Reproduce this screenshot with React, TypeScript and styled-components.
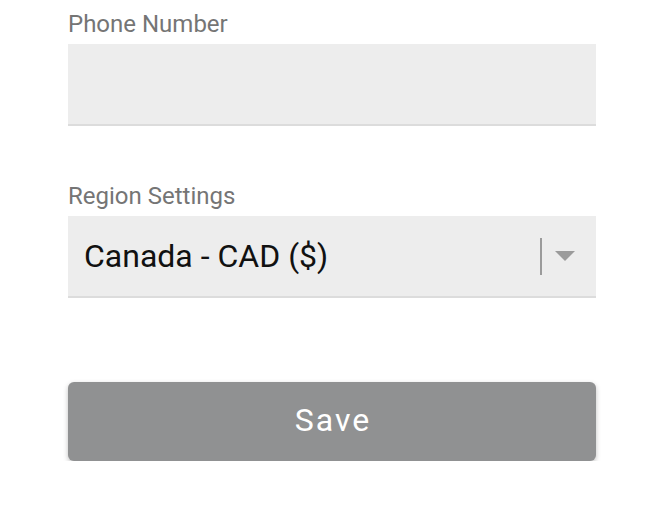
import React from 'react'
import styled, { createGlobalStyle } from 'styled-components'

const GlobalStyle = createGlobalStyle`
  body {
    margin: 0;
    background: #ffffff;
    font-family: Roboto, "Liberation Sans", sans-serif;
  }
`

const Page = styled.div`
  width: 528px;
  padding: 10px 0 0 68px;
  display: flex;
  flex-direction: column;
`

const Field = styled.div<{ gap?: number }>`
  display: flex;
  flex-direction: column;
  margin-bottom: ${({ gap }) => gap ?? 0}px;
`

const Label = styled.label`
  font-size: 24px;
  line-height: 28px;
  color: #757575;
  margin-bottom: 6px;
`

const Input = styled.input`
  box-sizing: border-box;
  height: 82px;
  border: none;
  border-bottom: 2px solid #dcdcdc;
  background: #ededed;
  outline: none;
  padding: 0 16px;
  font-family: inherit;
  font-size: 32px;
`

const Select = styled.div`
  box-sizing: border-box;
  height: 82px;
  border-bottom: 2px solid #dcdcdc;
  background: #ededed;
  display: flex;
  align-items: center;
  padding: 0 21px 0 16px;
`

const SelectValue = styled.span`
  flex: 1;
  font-size: 32px;
  color: #111111;
`

const Divider = styled.span`
  width: 2px;
  height: 37px;
  background: #9b9b9b;
  margin-right: 13px;
`

const Arrow = styled.span`
  width: 0;
  height: 0;
  border-left: 10px solid transparent;
  border-right: 10px solid transparent;
  border-top: 10px solid #9b9b9b;
`

const SaveButton = styled.button`
  height: 79px;
  border: none;
  border-radius: 6px;
  background: #909192;
  color: #ffffff;
  font-family: inherit;
  font-size: 32px;
  letter-spacing: 2px;
  padding: 0 0 4px 2px;
  box-shadow: 0 2px 5px rgba(0, 0, 0, 0.25);
  cursor: pointer;
`

export default function App() {
  return (
    <>
      <GlobalStyle />
      <Page>
        <Field gap={56}>
          <Label>Phone Number</Label>
          <Input type="tel" />
        </Field>
        <Field gap={84}>
          <Label>Region Settings</Label>
          <Select>
            <SelectValue>Canada - CAD ($)</SelectValue>
            <Divider />
            <Arrow />
          </Select>
        </Field>
        <SaveButton>Save</SaveButton>
      </Page>
    </>
  )
}
